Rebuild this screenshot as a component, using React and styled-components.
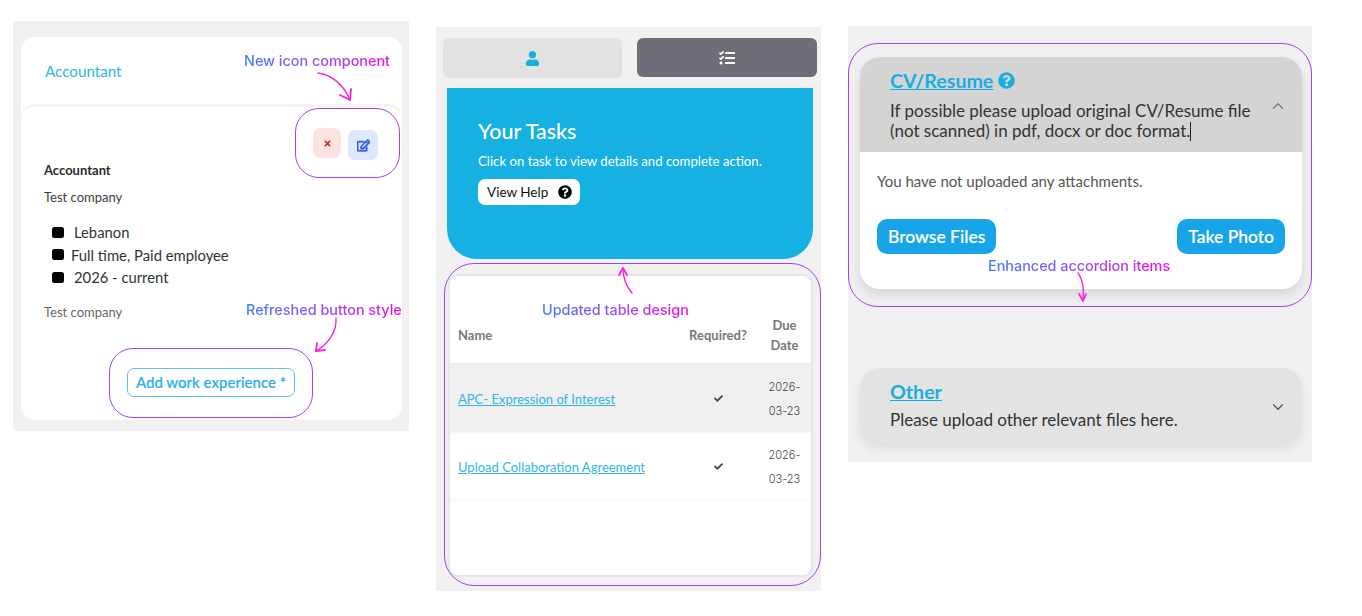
import React from 'react'
import styled, { createGlobalStyle } from 'styled-components'
import { FaUser, FaTasks, FaQuestionCircle, FaRegEdit, FaTimes, FaCheck } from 'react-icons/fa'
import { ChevronUp, ChevronDown } from 'lucide-react'

const GlobalStyle = createGlobalStyle`
    html, body{
        margin: 0;
        padding: 0;
        background: #fff;
    }
    body{
        font-family: "Lato", "Liberation Sans", sans-serif;
    }
`

const tasks = [
    { name: 'APC- Expression of Interest', shaded: true },
    { name: 'Upload Collaboration Agreement', shaded: false },
]

const facts = [
    { label: 'Lebanon', indent: 10 },
    { label: 'Full time, Paid employee', indent: 7 },
    { label: '2026 - current', indent: 10 },
]

const Arrow = ({ className, line, head, width, height }) => (
    <svg className={className} width={width} height={height} viewBox={`0 0 ${width} ${height}`} fill="none">
        <path d={line} stroke="#fb22dc" strokeWidth="1.4" strokeLinecap="round" />
        <path d={head} stroke="#fb22dc" strokeWidth="1.8" strokeLinecap="round" strokeLinejoin="round" />
    </svg>
)

const App = () => {
    return (
        <Page>
            <GlobalStyle />
            <ProfilePanel>
                <Card>
                    <CardHeader>Accountant</CardHeader>
                    <CardBody>
                        <Actions>
                            <DeleteButton><FaTimes size={9} /></DeleteButton>
                            <EditButton><FaRegEdit size={13} stroke="currentColor" strokeWidth={30} /></EditButton>
                        </Actions>
                        <JobTitle>Accountant</JobTitle>
                        <Company>Test company</Company>
                        <Facts>
                            {facts.map(fact => (
                                <Fact key={fact.label}>
                                    <Bullet />
                                    <FactText $indent={fact.indent}>{fact.label}</FactText>
                                </Fact>
                            ))}
                        </Facts>
                        <CompanyNote>Test company</CompanyNote>
                        <AddRow>
                            <AddButton>Add work experience *</AddButton>
                        </AddRow>
                    </CardBody>
                </Card>
                <IconHighlight />
                <AddHighlight />
                <IconLabel>New icon component</IconLabel>
                <ButtonLabel>Refreshed button style</ButtonLabel>
                <IconArrow width={38} height={32} line="M2 2C16 4 28 14 34 29" head="M24 24L34 29L35 18" />
                <ButtonArrow width={28} height={40} line="M24 2C25 16 16 28 4 35" head="M5 27L4 35L13 34" />
            </ProfilePanel>

            <TasksPanel>
                <Tabs>
                    <Tab><FaUser size={15} color="#17aee0" /></Tab>
                    <ActiveTab><FaTasks size={16} color="#fff" /></ActiveTab>
                </Tabs>
                <Hero>
                    <HeroTitle>Your Tasks</HeroTitle>
                    <HeroText>Click on task to view details and complete action.</HeroText>
                    <HelpButton>View Help <FaQuestionCircle size={14} color="#000" /></HelpButton>
                </Hero>
                <TableCard>
                    <HeadRow>
                        <HeadCell>Name</HeadCell>
                        <HeadCell $center>Required?</HeadCell>
                        <HeadCell $center>Due<br />Date</HeadCell>
                    </HeadRow>
                    {tasks.map(task => (
                        <TaskRow key={task.name} $shaded={task.shaded}>
                            <TaskLink>{task.name}</TaskLink>
                            <CheckCell><FaCheck size={9} /></CheckCell>
                            <DateCell>2026-<br />03-23</DateCell>
                        </TaskRow>
                    ))}
                </TableCard>
                <TableHighlight />
                <TableLabel>Updated table design</TableLabel>
                <TableArrow width={18} height={30} line="M14 27C8 20 5 12 5 2" head="M1 9L5 2L9 9" />
            </TasksPanel>

            <UploadPanel>
                <OpenItem>
                    <OpenHeader>
                        <HeaderText>
                            <ItemTitle>
                                <TitleLink>CV/Resume</TitleLink>
                                <FaQuestionCircle size={17} color="#17aee0" />
                            </ItemTitle>
                            <OpenText>
                                If possible please upload original CV/Resume file (not scanned) in pdf, docx or doc format.<Caret />
                            </OpenText>
                        </HeaderText>
                        <UpChevron size={18} color="#777" strokeWidth={1.6} />
                    </OpenHeader>
                    <ItemBody>
                        <EmptyText>You have not uploaded any attachments.</EmptyText>
                        <UploadButtons>
                            <UploadButton>Browse Files</UploadButton>
                            <UploadButton>Take Photo</UploadButton>
                        </UploadButtons>
                    </ItemBody>
                </OpenItem>
                <ClosedItem>
                    <HeaderText>
                        <ItemTitle>
                            <TitleLink>Other</TitleLink>
                        </ItemTitle>
                        <ClosedText>Please upload other relevant files here.</ClosedText>
                    </HeaderText>
                    <DownChevron size={18} color="#555" strokeWidth={1.6} />
                </ClosedItem>
                <AccordionHighlight />
                <AccordionLabel>Enhanced accordion items</AccordionLabel>
                <AccordionArrow width={16} height={32} line="M4 2C10 10 10 20 9 29" head="M5 23L9 30L12 23" />
            </UploadPanel>
        </Page>
    )
}

const Page = styled.div`
    display: flex;
    align-items: flex-start;
    gap: 27px;
    width: 1362px;
    height: 616px;
    padding-left: 13px;
    box-sizing: border-box;
    overflow: hidden;
    background: #fff;
`

const Panel = styled.div`
    position: relative;
    flex: none;
    box-sizing: border-box;
    background: #f1f1f1;
`

/* annotation layer: outlines, labels and arrows drawn on top of the screens */
const Highlight = styled.div`
    position: absolute;
    box-sizing: border-box;
    border: 1.5px solid #a23ff0;
    border-radius: 24px;
    pointer-events: none;
`

const Label = styled.span`
    position: absolute;
    font-family: "Inter", "Liberation Sans", sans-serif;
    font-size: 14.4px;
    font-weight: 550;
    line-height: 18px;
    white-space: nowrap;
    background: linear-gradient(90deg, #3f7dff 0%, #9a4cf0 50%, #ee0ce8 100%);
    -webkit-background-clip: text;
    background-clip: text;
    color: transparent;
`

const ArrowMark = styled(Arrow)`
    position: absolute;
`

/* left screen */
const ProfilePanel = styled(Panel)`
    width: 396px;
    height: 410px;
    margin-top: 21px;
    padding: 16px 7px 11px 8px;
`

const Card = styled.div`
    height: 383px;
    background: #fff;
    border-radius: 14px;
    overflow: hidden;
`

const CardHeader = styled.div`
    display: flex;
    align-items: center;
    height: 67px;
    padding-left: 24px;
    font-size: 15.2px;
    color: #2ab5e6;
`

const CardBody = styled.div`
    box-sizing: border-box;
    height: 316px;
    padding: 0 23px;
    border-top: 3px solid #f3f3f3;
    border-radius: 14px 14px 0 0;
`

const Actions = styled.div`
    display: flex;
    justify-content: flex-end;
    align-items: flex-start;
    gap: 7px;
    margin-top: 21px;
    padding-right: 1px;
`

const IconButton = styled.button`
    display: flex;
    align-items: center;
    justify-content: center;
    padding: 0;
    border: 0;
    border-radius: 7px;
`

const DeleteButton = styled(IconButton)`
    width: 28px;
    height: 30px;
    background: #fde2e2;
    color: #c8302f;
`

const EditButton = styled(IconButton)`
    width: 30px;
    height: 30px;
    margin-top: 2px;
    background: #dbe8fd;
    color: #2f55d8;
`

const JobTitle = styled.div`
    font-size: 13px;
    font-weight: 700;
    line-height: 20px;
    color: #2b2b2b;
`

const Company = styled.div`
    margin-top: 7px;
    font-size: 13px;
    line-height: 20px;
    color: #3d3d3d;
`

const Facts = styled.ul`
    list-style: none;
    margin: 14px 0 0 8px;
    padding: 0;
`

const Fact = styled.li`
    display: flex;
    align-items: center;
    height: 22.5px;
`

const Bullet = styled.span`
    flex: none;
    width: 12px;
    height: 11px;
    background: #000;
    border-radius: 2.5px;
`

const FactText = styled.span`
    margin-left: ${props => props.$indent}px;
    font-size: 14.8px;
    color: #333;
`

const CompanyNote = styled(Company)`
    margin-top: 13px;
    color: #666;
`

const AddRow = styled.div`
    display: flex;
    padding-left: 83px;
    margin-top: 46px;
`

const AddButton = styled.button`
    box-sizing: border-box;
    width: 168px;
    height: 29px;
    padding: 0;
    background: #fff;
    border: 1.5px solid #5cc0f0;
    border-radius: 7px;
    font-family: inherit;
    font-size: 15px;
    font-weight: 500;
    color: #2bb0ee;
    -webkit-text-stroke: 0.2px #2bb0ee;
`

const IconHighlight = styled(Highlight)`
    left: 282px;
    top: 87px;
    width: 105px;
    height: 70px;
`

const AddHighlight = styled(Highlight)`
    left: 96px;
    top: 327px;
    width: 204px;
    height: 70px;
`

const IconLabel = styled(Label)`
    left: 231px;
    top: 31px;
`

const ButtonLabel = styled(Label)`
    left: 233px;
    top: 280px;
`

const IconArrow = styled(ArrowMark)`
    left: 303px;
    top: 50px;
`

const ButtonArrow = styled(ArrowMark)`
    left: 299px;
    top: 295px;
`

/* middle screen */
const TasksPanel = styled(Panel)`
    width: 385px;
    height: 564px;
    margin-top: 27px;
    padding: 11px 4px 0 7px;
`

const Tabs = styled.div`
    display: flex;
    gap: 15px;
`

const Tab = styled.div`
    display: flex;
    align-items: center;
    justify-content: center;
    width: 179px;
    height: 40px;
    background: #e2e2e2;
    border-radius: 6px;
`

const ActiveTab = styled(Tab)`
    width: 180px;
    height: 39px;
    background: #6e6e78;
`

const Hero = styled.div`
    box-sizing: border-box;
    width: 366px;
    height: 171px;
    margin: 10px 0 0 4px;
    padding: 30px 0 0 31px;
    background: #17b0e3;
    border-radius: 0 0 30px 30px;
    color: #fff;
`

const HeroTitle = styled.div`
    font-size: 21.5px;
    font-weight: 500;
    line-height: 27px;
`

const HeroText = styled.div`
    margin-top: 6px;
    font-size: 13.2px;
    line-height: 20px;
`

const HelpButton = styled.div`
    display: flex;
    align-items: center;
    justify-content: space-between;
    box-sizing: border-box;
    width: 102px;
    height: 26px;
    margin-top: 8px;
    padding: 0 8px 0 9px;
    background: #fff;
    border-radius: 7px;
    font-size: 13.5px;
    color: #111;
`

const TableCard = styled.div`
    box-sizing: border-box;
    width: 365px;
    height: 303px;
    margin: 15px 0 0 5px;
    background: #fff;
    border: 2px solid #e6e6e6;
    border-radius: 10px;
    overflow: hidden;
`

const tableColumns = '228px 80px 1fr'

const HeadRow = styled.div`
    display: grid;
    grid-template-columns: ${tableColumns};
    align-items: center;
    box-sizing: border-box;
    height: 89px;
    padding-top: 31px;
    border-bottom: 2px solid #ececec;
`

const HeadCell = styled.div`
    padding-left: ${props => (props.$center ? '0' : '8px')};
    font-size: 13px;
    font-weight: 700;
    line-height: 20px;
    color: #77777d;
    text-align: ${props => (props.$center ? 'center' : 'left')};
`

const TaskRow = styled.div`
    display: grid;
    grid-template-columns: ${tableColumns};
    align-items: center;
    height: 68px;
    background: ${props => (props.$shaded ? '#f0f0f0' : '#fff')};
    border-bottom: 1px solid #f6f6f6;
    box-sizing: border-box;
`

const TaskLink = styled.a`
    padding-left: 8px;
    font-size: 13px;
    color: #2fb6e6;
    text-decoration: underline;
    white-space: nowrap;
`

const CheckCell = styled.div`
    display: flex;
    justify-content: center;
    color: #444;
`

const DateCell = styled.div`
    font-family: "Inter", "Liberation Sans", sans-serif;
    font-size: 11px;
    font-weight: 300;
    line-height: 24px;
    color: #444;
    text-align: center;
`

const TableHighlight = styled(Highlight)`
    left: 8px;
    top: 236px;
    width: 377px;
    height: 323px;
    border-radius: 30px;
`

const TableLabel = styled(Label)`
    left: 106px;
    top: 274px;
`

const TableArrow = styled(ArrowMark)`
    left: 182px;
    top: 239px;
`

/* right screen */
const UploadPanel = styled(Panel)`
    width: 464px;
    height: 436px;
    margin-top: 26px;
    padding: 31px 10px 0 12px;
`

const OpenItem = styled.div`
    height: 232px;
    background: #fff;
    border-radius: 20px;
    box-shadow: 0 6px 12px rgba(0, 0, 0, 0.12);
    overflow: hidden;
`

const OpenHeader = styled.div`
    display: flex;
    align-items: center;
    justify-content: space-between;
    box-sizing: border-box;
    height: 95px;
    padding: 0 15px 0 30px;
    background: #d4d4d4;
`

const HeaderText = styled.div`
    width: 368px;
`

const ItemTitle = styled.div`
    display: flex;
    align-items: center;
    gap: 5px;
    height: 24px;
`

const TitleLink = styled.a`
    font-size: 19.6px;
    font-weight: 700;
    color: #17aee0;
    text-decoration: underline;
`

const ItemText = styled.div`
    font-size: 17px;
    line-height: 20px;
    color: #333;
`

const OpenText = styled(ItemText)`
    margin-top: 8px;
`

const ClosedText = styled(ItemText)`
    margin-top: 7px;
`

const UpChevron = styled(ChevronUp)`
    margin-top: 3px;
`

const DownChevron = styled(ChevronDown)`
    margin-top: 5px;
`

const Caret = styled.span`
    display: inline-block;
    width: 1px;
    height: 19px;
    vertical-align: -4px;
    background: #222;
`

const ItemBody = styled.div`
    padding: 19px 17px 0;
`

const EmptyText = styled.div`
    font-size: 15px;
    line-height: 20px;
    color: #555;
`

const UploadButtons = styled.div`
    display: flex;
    justify-content: space-between;
    margin-top: 28px;
`

const UploadButton = styled.button`
    height: 35px;
    padding: 0 11px;
    background: #17a4e8;
    border: 0;
    border-radius: 10px;
    font-family: inherit;
    font-size: 17.5px;
    font-weight: 500;
    color: #fff;
    -webkit-text-stroke: 0.2px #fff;
`

const ClosedItem = styled.div`
    display: flex;
    align-items: center;
    justify-content: space-between;
    box-sizing: border-box;
    height: 75px;
    margin-top: 79px;
    padding: 0 15px 2px 30px;
    background: #e3e3e3;
    border-radius: 20px;
    box-shadow: 0 6px 12px rgba(0, 0, 0, 0.08);
`

const AccordionHighlight = styled(Highlight)`
    left: 0;
    top: 17px;
    width: 464px;
    height: 264px;
    border-radius: 30px;
`

const AccordionLabel = styled(Label)`
    left: 140px;
    top: 231px;
`

const AccordionArrow = styled(ArrowMark)`
    left: 226px;
    top: 245px;
`

export default App
